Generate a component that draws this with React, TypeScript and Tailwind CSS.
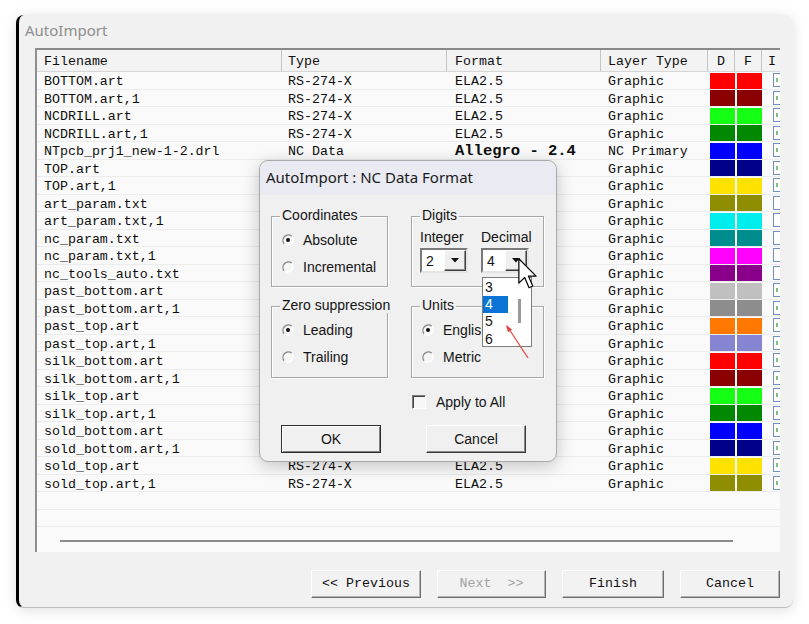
import React from "react";

// swatch colours, written out in full so Tailwind picks them up
const palette = [
  "bg-[#ff0000]", "bg-[#8b0000]", "bg-[#14ff14]", "bg-[#008800]",
  "bg-[#0000ff]", "bg-[#000088]", "bg-[#ffe200]", "bg-[#8e8e00]",
  "bg-[#00eded]", "bg-[#008d8d]", "bg-[#ff00ff]", "bg-[#8a008a]",
  "bg-[#c0c0c0]", "bg-[#8d8d8d]", "bg-[#ff7800]", "bg-[#8585d2]",
];

const files = [
  "BOTTOM.art", "BOTTOM.art,1", "NCDRILL.art", "NCDRILL.art,1",
  "NTpcb_prj1_new-1-2.drl", "TOP.art", "TOP.art,1",
  "art_param.txt", "art_param.txt,1", "nc_param.txt", "nc_param.txt,1", "nc_tools_auto.txt",
  "past_bottom.art", "past_bottom.art,1", "past_top.art", "past_top.art,1",
  "silk_bottom.art", "silk_bottom.art,1", "silk_top.art", "silk_top.art,1",
  "sold_bottom.art", "sold_bottom.art,1", "sold_top.art", "sold_top.art,1",
];

const mono = "font-['Liberation_Mono',monospace]";
const sans = "font-['Liberation_Sans',Arial,sans-serif]";

export default function App() {
  return (
    <div className={`h-[624px] w-[809px] bg-white pl-[16px] pt-[15px] ${mono}`}>
      <div className="relative flex h-[593px] w-[777px] flex-col rounded-lg border-b border-l-[3px] border-b-[#bdbdbd] border-l-black bg-[#f1f1f1] shadow-[0_2px_14px_rgba(0,0,0,0.13)]">
        <div className="flex h-[33px] items-center pb-[3px] pl-[6px] font-['Noto_Sans',sans-serif] text-[15px] text-[#8e8e8e]">
          AutoImport
        </div>

        <FileList />

        <div className="mt-[18px] flex justify-end gap-[16px] pr-[13px] text-[13.3px] text-[#111]">
          <WizButton className="w-[110px]">{"<< Previous"}</WizButton>
          <WizButton className="w-[109px] text-[#a3a3a3]">{"Next  >>"}</WizButton>
          <WizButton className="w-[102px]">Finish</WizButton>
          <WizButton className="w-[100px]">Cancel</WizButton>
        </div>

        <NcDialog />
      </div>
    </div>
  );
}

function FileList() {
  return (
    <div className="ml-[16px] flex h-[504px] w-[745px] flex-col border-l-2 border-[#8f8f8f] bg-[#fafafa] text-[13.3px] leading-none text-[#0e0e0e]">
      <div className="flex h-[24px] items-center border-t-2 border-b border-t-[#8a8a8a] border-b-[#d6d6d6] bg-[#f3f3f3] whitespace-nowrap">
        <HeadCell className="w-[245px] pl-[7px]">Filename</HeadCell>
        <HeadCell className="w-[165px] pl-[6px]">Type</HeadCell>
        <HeadCell className="w-[154px] pl-[8px]">Format</HeadCell>
        <HeadCell className="w-[107px] pl-[7px]">Layer Type</HeadCell>
        <HeadCell className="w-[27px] justify-center">D</HeadCell>
        <HeadCell className="w-[27px] justify-center">F</HeadCell>
        <HeadCell className="w-[18px] pl-[6px]" last>I</HeadCell>
      </div>

      {files.map((name, i) => (
        <FileRow key={name} name={name} i={i} />
      ))}

      <div className="flex h-[17.5px] border-b border-[#ececec]" />
      <div className="flex h-[17.5px] border-b border-[#ececec]" />
      <div className="ml-[23px] mt-[13px] h-[2px] w-[673px] bg-[#8c8c8c]" />
    </div>
  );
}

function HeadCell({ className, children, last }: { className: string; children: React.ReactNode; last?: boolean }) {
  return (
    <div className={`flex h-full items-center pt-[2px] ${last ? "" : "border-r border-[#c4c4c4]"} ${className}`}>
      {children}
    </div>
  );
}

function FileRow({ name, i }: { name: string; i: number }) {
  const nc = name.endsWith(".drl");
  const swatch = palette[i % 16];
  const enabled = !name.includes(".txt");
  return (
    <div className="flex h-[17.5px] shrink-0 items-center border-b border-[#ececec] whitespace-nowrap">
      <div className="w-[245px] pl-[7px] pt-[3px]">{name}</div>
      <div className="w-[165px] pl-[6px] pt-[3px]">{nc ? "NC Data" : "RS-274-X"}</div>
      <div className="w-[154px] pl-[8px] pt-[3px]">
        {nc ? <span className="text-[15.5px] font-bold">Allegro - 2.4</span> : "ELA2.5"}
      </div>
      <div className="w-[107px] pl-[7px] pt-[3px]">{nc ? "NC Primary" : "Graphic"}</div>
      <div className="flex h-full w-[27px] items-center pl-[2px] pt-[1px]">
        <div className={`h-[16px] w-[25px] ${swatch}`} />
      </div>
      <div className="flex h-full w-[27px] items-center pl-[2px] pt-[1px]">
        <div className={`h-[16px] w-[25px] ${swatch}`} />
      </div>
      <div className="flex h-full w-[18px] items-center overflow-hidden pl-[11px]">
        <div className="flex h-[14px] w-[14px] shrink-0 items-center border border-[#7290bb] bg-white pl-[2px]">
          {enabled && <div className="h-[4px] w-[2px] bg-[#7cc47c]" />}
        </div>
      </div>
    </div>
  );
}

function WizButton({ className, children }: { className: string; children: React.ReactNode }) {
  return (
    <div
      className={`flex h-[28px] items-center justify-center whitespace-pre border border-t-white border-l-white border-r-[#6e6e6e] border-b-[#6e6e6e] bg-[#f2f2f2] shadow-[inset_-1px_-1px_0_#b4b4b4] ${className}`}
    >
      {children}
    </div>
  );
}

function NcDialog() {
  return (
    <div
      className={`absolute left-[240px] top-[145px] flex h-[302px] w-[298px] flex-col rounded-[9px] border border-[#a9a9a9] bg-[#f0f0f0] text-[14px] leading-none text-[#141414] shadow-[0_4px_18px_rgba(0,0,0,0.22)] ${sans}`}
    >
      <div className="flex h-[34px] items-center rounded-t-[9px] bg-[#eaeaf2] pb-[1px] pl-[6px] font-['Noto_Sans',sans-serif] text-[15px] text-[#1a1a1a]">
        AutoImport : NC Data Format
      </div>

      <div className="flex flex-col pl-[11px]">
        <div className="mt-[21px] flex gap-[23px]">
          <GroupBox label="Coordinates" className="h-[71px] w-[117px] pl-[10px] pt-[13px]">
            <Radio label="Absolute" checked />
            <Radio label="Incremental" />
          </GroupBox>
          <GroupBox label="Digits" className="h-[71px] w-[133px] pl-[8px] pt-[12px]">
            <div className="flex gap-[13px]">
              <div className="flex flex-col gap-[3px]">
                <div className="flex h-[16px] items-center">Integer</div>
                <Combo value="2" />
              </div>
              <div className="flex flex-col gap-[3px]">
                <div className="flex h-[16px] items-center">Decimal</div>
                <Combo value="4" />
              </div>
            </div>
          </GroupBox>
        </div>

        <div className="mt-[19px] flex gap-[23px]">
          <GroupBox label="Zero suppression" className="h-[72px] w-[117px] pl-[10px] pt-[13px]">
            <Radio label="Leading" checked />
            <Radio label="Trailing" />
          </GroupBox>
          <GroupBox label="Units" className="h-[72px] w-[133px] pl-[10px] pt-[13px]">
            <Radio label="English" checked />
            <Radio label="Metric" />
          </GroupBox>
        </div>

        <div className="ml-[141px] mt-[16px] flex h-[16px] items-center gap-[10px]">
          <div className="h-[14px] w-[14px] border border-t-[#7a7a7a] border-l-[#7a7a7a] border-r-white border-b-white bg-[#f7f7f7] shadow-[inset_1px_1px_0_#444]" />
          <span>Apply to All</span>
        </div>

        <div className="ml-[10px] mt-[15px] flex gap-[45px]">
          <div className="flex h-[28px] w-[100px] items-center justify-center border border-[#2e2e2e] bg-[#f0f0f0] shadow-[inset_1px_1px_0_#fff,inset_-1px_-1px_0_#808080]">
            OK
          </div>
          <div className="flex h-[28px] w-[100px] items-center justify-center border border-t-white border-l-white border-r-[#3a3a3a] border-b-[#3a3a3a] bg-[#f0f0f0] shadow-[inset_-1px_-1px_0_#8a8a8a]">
            Cancel
          </div>
        </div>
      </div>

      {/* open drop-down of the Decimal combo */}
      <div className="absolute left-[222px] top-[116px] flex h-[70px] w-[50px] overflow-hidden border border-[#7d7d7d] bg-white">
        <div className="flex w-[25px] flex-col">
          <div className="flex h-[17.5px] shrink-0 items-center pl-[2px]">3</div>
          <div className="flex h-[17px] shrink-0 items-center bg-[#0a74d6] pl-[2px] text-white">4</div>
          <div className="flex h-[17.5px] shrink-0 items-center pl-[2px]">5</div>
          <div className="flex h-[17.5px] shrink-0 items-center pl-[2px]">6</div>
        </div>
        <div className="pl-[10px] pt-[21px]">
          <div className="h-[24px] w-[3px] bg-[#9a9a9a]" />
        </div>
      </div>

      {/* red annotation arrow */}
      <svg className="absolute left-[240px] top-[158px]" width="36" height="46" viewBox="0 0 36 46">
        <line x1="28" y1="39" x2="7" y2="7" stroke="#e5413a" strokeWidth="1.2" />
        <polygon points="6,6 12,10.6 8,13.2" fill="#e5413a" />
      </svg>

      {/* mouse pointer */}
      <svg className="absolute left-[258px] top-[97px]" width="20" height="32" viewBox="0 0 13 21">
        <path
          d="M0.5 0.5 L0.5 16.5 L4.3 12.8 L7.2 19.5 L9.6 18.4 L6.8 11.9 L11.8 11.9 Z"
          fill="#fff"
          stroke="#000"
          strokeWidth="0.8"
          strokeLinejoin="round"
        />
      </svg>
    </div>
  );
}

function GroupBox({ label, className, children }: { label: string; className: string; children: React.ReactNode }) {
  return (
    <div className={`relative flex flex-col border border-[#a7a7a7] shadow-[inset_1px_1px_0_#fff,1px_1px_0_#fff] ${className}`}>
      <span className="absolute -top-[10px] left-[8px] bg-[#f0f0f0] px-[2px] leading-[16px] whitespace-nowrap">
        {label}
      </span>
      {children}
    </div>
  );
}

function Radio({ label, checked }: { label: string; checked?: boolean }) {
  return (
    <div className="mb-[7px] flex h-[20px] items-center gap-[9px] whitespace-nowrap">
      <svg width="12" height="12" viewBox="0 0 12 12" className="shrink-0">
        <circle cx="6" cy="6" r="5" fill="#f6f6f6" />
        <path d="M9.8 2.2 A5.4 5.4 0 0 0 2.2 9.8" fill="none" stroke="#8a8a8a" strokeWidth="1.3" />
        <path d="M9.8 2.2 A5.4 5.4 0 0 1 2.2 9.8" fill="none" stroke="#ffffff" strokeWidth="1.3" />
        {checked && <circle cx="6" cy="6" r="2" fill="#111" />}
      </svg>
      <span>{label}</span>
    </div>
  );
}

function Combo({ value }: { value: string }) {
  return (
    <div className="flex h-[25px] w-[48px] items-center justify-between border-2 border-t-[#7a7a7a] border-l-[#7a7a7a] border-r-[#e4e4e4] border-b-[#e4e4e4] bg-white pl-[4px] pr-0">
      <span>{value}</span>
      <div className="flex h-[21px] w-[22px] items-center justify-center border border-t-white border-l-white border-r-[#404040] border-b-[#404040] bg-[#efefef] shadow-[inset_-1px_-1px_0_#8a8a8a]">
        <svg width="8" height="5" viewBox="0 0 8 5">
          <polygon points="0,0 8,0 4,4.5" fill="#111" />
        </svg>
      </div>
    </div>
  );
}
